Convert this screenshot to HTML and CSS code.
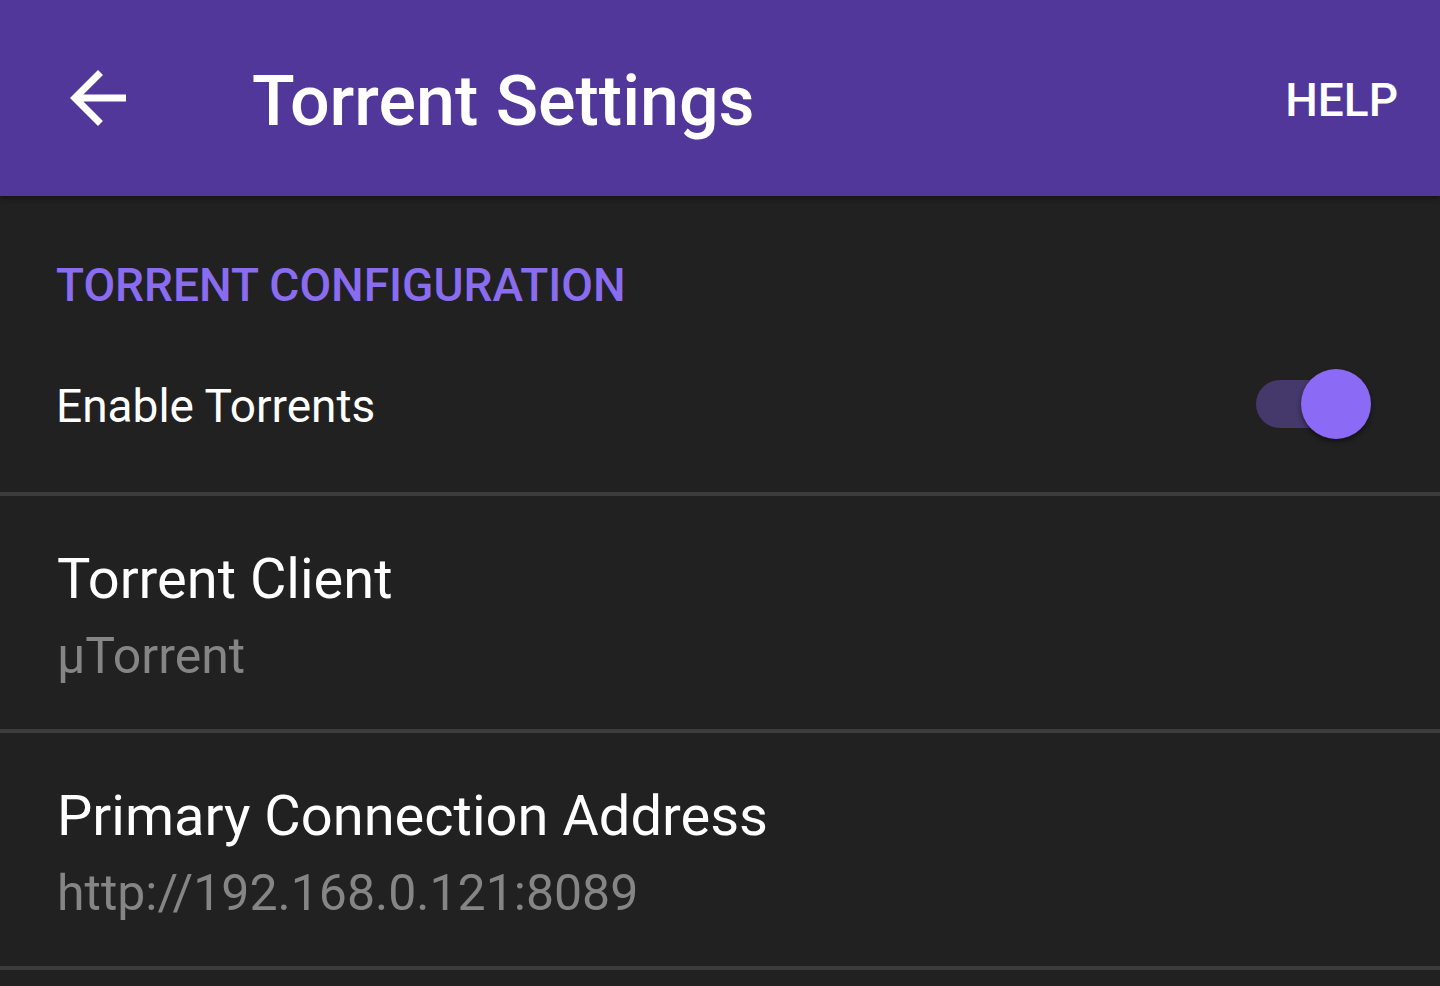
FILE: index.html
```html
<!DOCTYPE html>
<html lang="en">
<head>
<meta charset="utf-8">
<title>Torrent Settings</title>
<link rel="stylesheet" href="styles.css">
</head>
<body>
<div class="app">
  <header class="toolbar">
    <svg class="back" viewBox="0 0 24 24" width="84" height="84" aria-hidden="true">
      <path d="M20 11H7.83l5.59-5.59L12 4l-8 8 8 8 1.41-1.41L7.83 13H20v-2z" fill="#ffffff"/>
    </svg>
    <h1 class="title">Torrent Settings</h1>
    <span class="action">HELP</span>
  </header>
  <main class="prefs">
    <div class="section-title">TORRENT CONFIGURATION</div>
    <div class="pref pref-switch">
      <div class="switch-label">Enable Torrents</div>
      <div class="switch">
        <div class="track"></div>
        <div class="thumb"></div>
      </div>
    </div>
    <div class="pref pref-text">
      <div class="pref-title">Torrent Client</div>
      <div class="pref-summary">µTorrent</div>
    </div>
    <div class="pref pref-text">
      <div class="pref-title">Primary Connection Address</div>
      <div class="pref-summary">http://192.168.0.121:8089</div>
    </div>
  </main>
</div>
</body>
</html>
```
FILE: styles.css
```css
* { box-sizing: border-box; }
html, body {
  margin: 0;
  padding: 0;
  background: #212121;
  font-family: Roboto, "Noto Sans", "Liberation Sans", sans-serif;
  color: #ffffff;
}
.app {
  width: 1440px;
  height: 986px;
  overflow: hidden;
  background: #212121;
}
.toolbar {
  position: relative;
  z-index: 1;
  height: 196px;
  background: #51379a;
  display: flex;
  align-items: center;
  padding: 0 42px 0 56px;
  box-shadow: 0 2px 6px rgba(0,0,0,0.45);
}
.back {
  flex: none;
  display: block;
}
.title {
  margin: 0 0 0 112px;
  padding-top: 5px;
  font-size: 70px;
  font-weight: 500;
  line-height: 1;
  flex: 1;
  letter-spacing: 0;
}
.action {
  font-size: 46px;
  font-weight: 500;
  padding-top: 3px;
  line-height: 1;
}
.prefs {
  display: flex;
  flex-direction: column;
}
.section-title {
  padding: 61px 56px 0 56px;
  font-size: 46px;
  line-height: 56px;
  font-weight: 500;
  color: #8a6cf0;
}
.pref {
  border-bottom: 4px solid #3c3c3c;
}
.pref-switch {
  height: 183px;
  display: flex;
  align-items: center;
  justify-content: space-between;
  padding: 10px 69px 4px 56px;
}
.switch-label {
  font-size: 46px;
  line-height: 56px;
}
.switch {
  position: relative;
  width: 115px;
  height: 70px;
  margin-bottom: 3px;
}
.track {
  position: absolute;
  left: 0;
  top: 11px;
  width: 114px;
  height: 48px;
  border-radius: 24px;
  background: #45386a;
}
.thumb {
  position: absolute;
  right: 0;
  top: 0;
  width: 70px;
  height: 70px;
  border-radius: 50%;
  background: #8b6af6;
  box-shadow: 0 3px 5px rgba(0,0,0,0.45);
}
.pref-text {
  padding: 51px 56px 43px 57px;
}
.pref-title {
  font-size: 56px;
  line-height: 64px;
}
.pref-summary {
  margin-top: 15px;
  font-size: 50px;
  line-height: 60px;
  color: #858585;
}
```
